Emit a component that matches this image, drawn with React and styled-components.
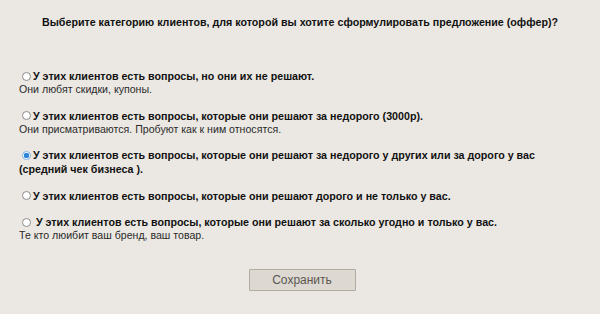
import React, { useState } from 'react';
import styled, { createGlobalStyle } from 'styled-components';

const GlobalStyle = createGlobalStyle`
  html, body {
    margin: 0;
    padding: 0;
    background: #ebe8e3;
  }
  body {
    font-family: "Liberation Sans", Arial, sans-serif;
    color: #111;
  }
`;

const options = [
  {
    label: 'У этих клиентов есть вопросы, но они их не решают.',
    note: 'Они любят скидки, купоны.',
  },
  {
    label: 'У этих клиентов есть вопросы, которые они решают за недорого (3000р).',
    note: 'Они присматриваются. Пробуют как к ним относятся.',
  },
  {
    label:
      'У этих клиентов есть вопросы, которые они решают за недорого у других или за дорого у вас (средний чек бизнеса ).',
  },
  {
    label: 'У этих клиентов есть вопросы, которые они решают дорого и не только у вас.',
  },
  {
    label: 'У этих клиентов есть вопросы, которые они решают за сколько угодно и только у вас.',
    note: 'Те кто люибит ваш бренд, ваш товар.',
    spaced: true,
  },
];

const App = () => {
  const [picked, setPicked] = useState(2);

  return (
    <>
      <GlobalStyle />
      <Page>
        <Title>Выберите категорию клиентов, для которой вы хотите сформулировать предложение (оффер)?</Title>
        <List>
          {options.map((opt, i) => (
            <Option key={i}>
              <Label onClick={() => setPicked(i)}>
                <Radio $checked={picked === i} />
                {opt.spaced ? ' ' : ''}
                {opt.label}
              </Label>
              {opt.note && <Note>{opt.note}</Note>}
            </Option>
          ))}
        </List>
        <Footer>
          <SaveButton type="button">Сохранить</SaveButton>
        </Footer>
      </Page>
    </>
  );
};

const Page = styled.div`
  width: 600px;
  height: 314px;
  box-sizing: border-box;
  padding: 15px 19px 0 19px;
  display: flex;
  flex-direction: column;
`;

const Title = styled.h1`
  margin: 0;
  font-size: 10.7px;
  line-height: 14px;
  font-weight: bold;
  text-align: center;
  white-space: nowrap;
`;

const List = styled.div`
  margin-top: 40px;
  display: flex;
  flex-direction: column;
  gap: 12.5px;
`;

const Option = styled.div`
  display: flex;
  flex-direction: column;
`;

const Label = styled.div`
  font-size: 10.7px;
  line-height: 14px;
  font-weight: bold;
  white-space: pre-wrap;
  cursor: pointer;
`;

const Radio = styled.span`
  display: inline-block;
  box-sizing: border-box;
  width: 9px;
  height: 9px;
  margin: 0 2px 0 3px;
  vertical-align: -0.5px;
  border-radius: 50%;
  border: 1px solid ${(p) => (p.$checked ? '#7fb4e6' : '#8c8c8c')};
  background: ${(p) =>
    p.$checked ? 'radial-gradient(circle, #2f86d8 0 2.6px, #ffffff 3px)' : '#ffffff'};
`;

const Note = styled.div`
  font-size: 10.6px;
  line-height: 13px;
  color: #2a2a2a;
`;

const Footer = styled.div`
  margin-top: 27px;
  display: flex;
  justify-content: center;
  padding-left: 4px;
`;

const SaveButton = styled.button`
  width: 107px;
  height: 22px;
  background: #ddd9d2;
  border: 1px solid #b3aca1;
  border-radius: 1px;
  font-family: "Liberation Sans", Arial, sans-serif;
  font-size: 12px;
  color: #5b5750;
  padding: 0;
`;

export default App;
